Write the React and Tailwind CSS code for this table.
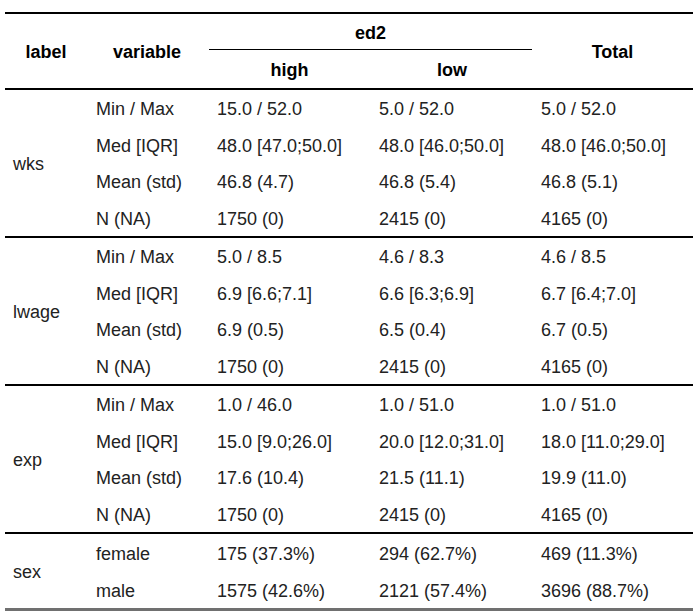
import React from 'react';

const groups = [
  {
    label: 'wks',
    rows: [
      ['Min / Max', '15.0 / 52.0', '5.0 / 52.0', '5.0 / 52.0'],
      ['Med [IQR]', '48.0 [47.0;50.0]', '48.0 [46.0;50.0]', '48.0 [46.0;50.0]'],
      ['Mean (std)', '46.8 (4.7)', '46.8 (5.4)', '46.8 (5.1)'],
      ['N (NA)', '1750 (0)', '2415 (0)', '4165 (0)'],
    ],
  },
  {
    label: 'lwage',
    rows: [
      ['Min / Max', '5.0 / 8.5', '4.6 / 8.3', '4.6 / 8.5'],
      ['Med [IQR]', '6.9 [6.6;7.1]', '6.6 [6.3;6.9]', '6.7 [6.4;7.0]'],
      ['Mean (std)', '6.9 (0.5)', '6.5 (0.4)', '6.7 (0.5)'],
      ['N (NA)', '1750 (0)', '2415 (0)', '4165 (0)'],
    ],
  },
  {
    label: 'exp',
    rows: [
      ['Min / Max', '1.0 / 46.0', '1.0 / 51.0', '1.0 / 51.0'],
      ['Med [IQR]', '15.0 [9.0;26.0]', '20.0 [12.0;31.0]', '18.0 [11.0;29.0]'],
      ['Mean (std)', '17.6 (10.4)', '21.5 (11.1)', '19.9 (11.0)'],
      ['N (NA)', '1750 (0)', '2415 (0)', '4165 (0)'],
    ],
  },
  {
    label: 'sex',
    last: true,
    rows: [
      ['female', '175 (37.3%)', '294 (62.7%)', '469 (11.3%)'],
      ['male', '1575 (42.6%)', '2121 (57.4%)', '3696 (88.7%)'],
    ],
  },
];

function Group({ group }) {
  const rowH = group.last ? 'h-[37px]' : 'h-[36.5px]';
  return (
    <div
      className={`flex ${group.last ? 'border-b-[3px] border-[#707070]' : 'border-b-2 border-black'}`}
    >
      <div className="w-[82px] pl-[8px] pt-[2px] flex items-center">{group.label}</div>
      <div className="flex flex-col">
        {group.rows.map((r, i) => (
          <div key={i} className={`flex items-center pt-[2px] ${rowH}`}>
            <div className="w-[120px] pl-[9px] whitespace-nowrap">{r[0]}</div>
            <div className="w-[165px] pl-[10px] whitespace-nowrap">{r[1]}</div>
            <div className="w-[160px] pl-[7px] whitespace-nowrap">{r[2]}</div>
            <div className="w-[161px] pl-[9px] whitespace-nowrap">{r[3]}</div>
          </div>
        ))}
      </div>
    </div>
  );
}

export default function App() {
  return (
    <div className="bg-white w-[697px] h-[616px] pt-[12px] pl-[5px] font-['Liberation_Sans',Arial,sans-serif] text-[18px] leading-none text-[#222]">
      <div className="w-[688px]">
        {/* header */}
        <div className="border-t-2 border-b-2 border-black grid grid-cols-[82px_120px_165px_160px_161px] grid-rows-[36px_38px] font-bold text-black">
          <div className="row-span-2 flex items-center justify-center pt-[1px]">label</div>
          <div className="row-span-2 flex items-center justify-center pt-[1px]">variable</div>
          <div className="col-span-2 flex items-center justify-center pt-[2px] ml-[2px] border-b border-black">
            ed2
          </div>
          <div className="row-span-2 col-start-5 row-start-1 flex items-center justify-center pt-[1px]">Total</div>
          <div className="flex items-center justify-center pt-[2px]">high</div>
          <div className="flex items-center justify-center pt-[2px]">low</div>
        </div>
        {groups.map(g => (
          <Group key={g.label} group={g} />
        ))}
      </div>
    </div>
  );
}
